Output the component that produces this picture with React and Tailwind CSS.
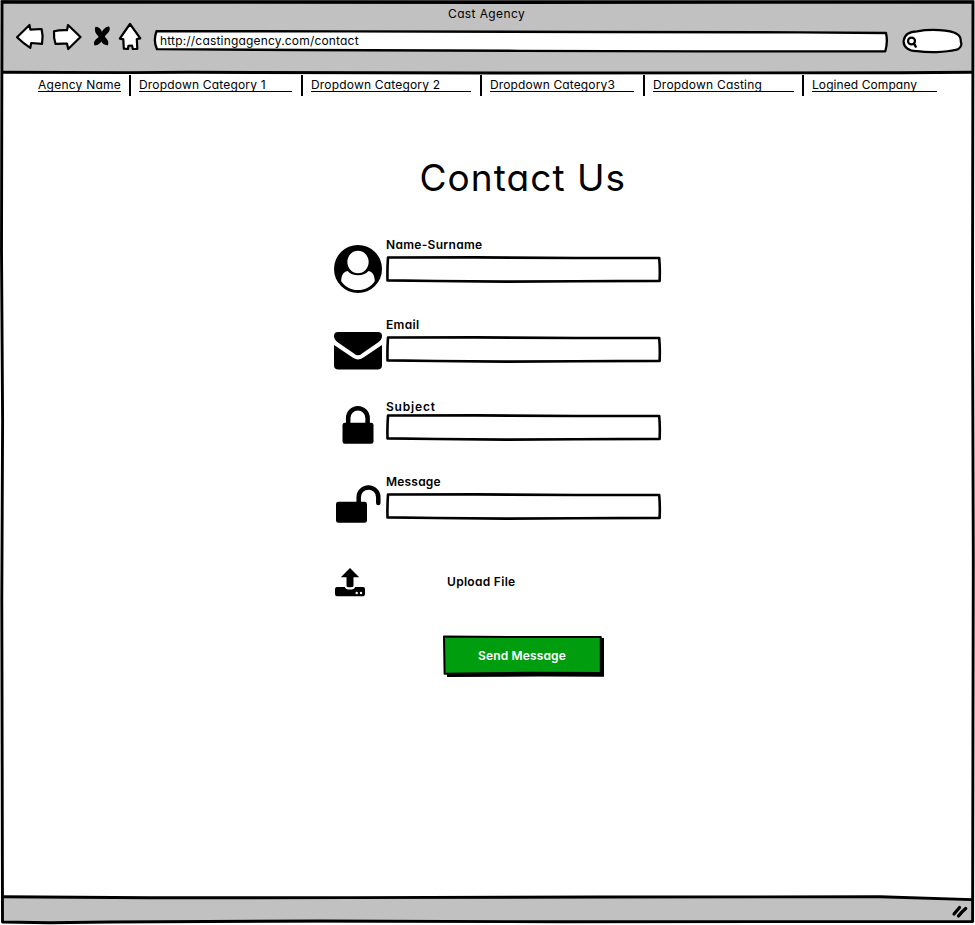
import React from "react";

const ink = { stroke: "#000", strokeLinejoin: "round", strokeLinecap: "round" };

function WindowFrame() {
  return (
    <svg className="pointer-events-none absolute inset-0" width="975" height="925" fill="none" {...ink}>
      <path d="M2 1 H973" stroke="#3d403d" strokeWidth="3" />
      <path d="M2 2 L500 2.5 L973 2.2 L972.5 300 L973.3 560 L972.6 921.5 L560 921.8 L320 921 L110 922 L50 922.8 L2.5 922 L1.8 600 L2.6 420 L1.5 250 Z" strokeWidth="2.9" />
      <path d="M3 72.3 L130 72.6 L190 72.3 L500 73 L900 72.8 L972 72.2" strokeWidth="2.9" />
      <path d="M3 896.8 L150 897.8 L350 897.6 L600 897 L880 896.8 L972 899.6" strokeWidth="2.9" />
    </svg>
  );
}

function NavIcons() {
  return (
    <svg className="h-[30px] w-[130px] shrink-0" viewBox="15 22 130 30" fill="#fff" strokeWidth="2.2" {...ink}>
      <path d="M17 37.2 L29.5 25 L30.4 29.6 L41.6 29 L42.6 36 L42 43.8 L31.2 43 L30.3 47.8 Q23 43 17 37.2 Z" />
      <path d="M54 31.2 Q60 29.8 67 30.2 L68 25 L80.5 37 L68.2 49 L67 43.6 Q61 43.5 55.5 43.8 Q53.6 38 54 31.2 Z" />
      <path d="M130 24 L140.3 38.3 L136.8 39 L137.3 48.8 L132.8 49 L132 45.5 L128.4 45.8 L128 49 L123.8 48.7 L123.3 39.4 L119.8 38.6 Q125 31 130 24 Z" />
      <path d="M96 27.6 Q99.8 28 101.2 32.6 L103.8 37 Q108.2 41 107.2 44.4 Q103.4 44.4 101.4 40 L99.4 36.4 Q94.6 31.4 96 27.6 Z" fill="#000" strokeWidth="1.8" />
      <path d="M108.8 27 Q110.4 30.4 105.4 34.6 L102.6 38.4 Q99.6 44.4 94.8 44.8 Q93.4 41.4 98.6 38 L101.6 33.4 Q104.4 27.4 108.8 27 Z" fill="#000" strokeWidth="1.2" />
    </svg>
  );
}

function AddressBar() {
  return (
    <div className="relative flex h-[24px] w-[736px] items-center">
      <svg className="absolute inset-0" width="736" height="24" viewBox="152 29 736 24" fill="#fff" strokeWidth="2.3" {...ink}>
        <path d="M156.5 31.2 L350 31.3 L600 32 L800 32.3 L886 33 Q888 42 885.3 51.3 L700 51.3 L520 50.8 L300 50 L157 49.2 Q153 41 156.5 31.2 Z" />
      </svg>
      <span className="relative ml-[8px] text-[12px] leading-4 tracking-[0.18px]">http://castingagency.com/contact</span>
    </div>
  );
}

function SearchBox() {
  return (
    <svg className="h-[26px] w-[62px] shrink-0" viewBox="901 28 62 26" fill="#fff" strokeWidth="2.2" {...ink}>
      <path d="M917 31.3 C930 29 950 29.6 957 34 C960.5 36 961 39 960.8 42 C962.5 45 960 49 956 49.8 C945 52.6 928 52.6 917 51.2 C909 51.5 903 47 903.7 40.5 C904.5 34 909 31.6 917 31.3 Z" />
      <ellipse cx="911.5" cy="41" rx="3.5" ry="3.3" />
      <path d="M914 43.5 L915.7 46.6" strokeWidth="2.4" />
    </svg>
  );
}

const menu = [
  { label: "Agency Name", cls: "w-[83px] tracking-[0.25px]", gap: "ml-[38px]" },
  { label: "Dropdown Category 1", cls: "w-[153px] tracking-[0.18px]", gap: "ml-[8px]" },
  { label: "Dropdown Category 2", cls: "w-[160px] tracking-[0.18px]", gap: "ml-[8px]" },
  { label: "Dropdown Category3", cls: "w-[144px] tracking-[0.14px]", gap: "ml-[8px]" },
  { label: "Dropdown Casting", cls: "w-[141px] tracking-[0.2px]", gap: "ml-[8px]" },
  { label: "Logined Company", cls: "w-[125px] tracking-[0.08px]", gap: "ml-[8px]" },
];
const dividerGap = ["ml-[8px]", "ml-[9px]", "ml-[9px]", "ml-[9px]", "ml-[8px]"];

function Menu() {
  return (
    <nav className="flex h-[23px] items-start text-[12px] leading-[13px]">
      {menu.map((m, i) => (
        <React.Fragment key={m.label}>
          <a className={`${m.gap} ${m.cls} mt-[5px] h-[14px] shrink-0 whitespace-nowrap border-b border-black`}>{m.label}</a>
          {i < dividerGap.length && <span className={`${dividerGap[i]} mt-[2px] h-[21px] w-[2px] shrink-0 bg-black`} />}
        </React.Fragment>
      ))}
    </nav>
  );
}

function UserIcon() {
  return (
    <svg width="48" height="48" viewBox="0 0 48 48">
      <circle cx="24" cy="24" r="24" />
      <path d="M13.5 26 C9 26.5 7.2 31.5 7.2 36.2 C11 42 17 45 24 45 C31 45 37 42 40.8 36.2 C40.8 31.5 39 26.5 34.5 26 C31.8 28.9 28 30.2 24 30.2 C20 30.2 16.2 28.9 13.5 26 Z" fill="#fff" />
      <ellipse cx="24" cy="17" rx="11.4" ry="12" fill="#fff" stroke="#000" strokeWidth="1.5" />
    </svg>
  );
}

function MailIcon() {
  return (
    <svg width="48" height="38" viewBox="0 0 48 38">
      <path d="M4 0 H44 Q48 0 48 4 Q48 7.5 44 10.5 L28 21.5 Q24 25.2 20 21.5 L4 10.5 Q0 7.5 0 4 Q0 0 4 0 Z" />
      <path d="M0 13 L19 25.8 Q24 29.4 29 25.8 L48 13 V33.2 Q48 37.5 43.5 37.5 H4.5 Q0 37.5 0 33.2 Z" />
    </svg>
  );
}

function LockIcon() {
  return (
    <svg width="32" height="38" viewBox="0 0 32 38">
      <path d="M6.2 19 V12 A9.7 9.7 0 0 1 25.6 12 V19" fill="none" stroke="#000" strokeWidth="4.5" />
      <rect x="0.5" y="16.8" width="31" height="21" rx="2.4" />
    </svg>
  );
}

function UnlockIcon() {
  return (
    <svg width="45" height="38" viewBox="0 0 45 38">
      <path d="M22.7 19 V12.2 A9.8 9.8 0 0 1 42.3 12.2 V18" fill="none" stroke="#000" strokeWidth="4.5" strokeLinecap="round" />
      <rect y="16.8" width="31" height="21" rx="2.4" />
    </svg>
  );
}

function UploadIcon() {
  return (
    <svg width="30" height="29" viewBox="0 0 30 29">
      <path d="M15 0 L24.2 9.3 H18.5 V18 Q18.3 19.3 15 19.3 Q11.7 19.3 11.5 18 V9.3 H5.8 Z" />
      <path d="M2 19 H9.8 Q10.8 21.6 15 21.6 Q19.2 21.6 20.2 19 H28 Q30 19 30 21 V26 Q30 28.3 28 28.3 H2 Q0 28.3 0 26 V21 Q0 19 2 19 Z" />
      <circle cx="21.7" cy="25" r="1.2" fill="#fff" />
      <circle cx="26" cy="25" r="1.2" fill="#fff" />
    </svg>
  );
}

function InputBox() {
  return (
    <svg className="block" width="276" height="28" viewBox="0 0 276 28" fill="#fff" strokeWidth="2.6" {...ink}>
      <path d="M2 1.5 L90 1.4 L190 2 L273.2 2 Q274.2 13 273.6 24.9 L190 25.3 L120 25.6 L50 25 L1.5 24.4 Q1.2 13 2 1.5 Z" />
    </svg>
  );
}

const fields = [
  { label: "Name-Surname", Icon: UserIcon, row: "h-[80px]", icon: "pt-[9px]", lab: "h-[20px] tracking-[0.3px]" },
  { label: "Email", Icon: MailIcon, row: "h-[82px]", icon: "pt-[16px]", lab: "h-[20px] tracking-[0.35px]" },
  { label: "Subject", Icon: LockIcon, row: "h-[75px]", icon: "pl-[8px] pt-[8px]", lab: "h-[16px] tracking-[0.8px]" },
  { label: "Message", Icon: UnlockIcon, row: "h-[95px]", icon: "pl-[2px] pt-[12px]", lab: "h-[20px] tracking-[0.2px]" },
];

function ContactForm() {
  return (
    <main className="flex-1">
      <h1 className="ml-[419.5px] mt-[56px] h-[52px] whitespace-nowrap text-[37px] font-[430] leading-[52px] tracking-[1.05px]">Contact Us</h1>
      <div className="ml-[334px] mt-[32px] w-[330px] text-[12px] font-semibold leading-4">
        {fields.map(({ label, Icon, row, icon, lab }) => (
          <div key={label} className={`flex ${row}`}>
            <div className={`w-[52px] shrink-0 ${icon}`}><Icon /></div>
            <div>
              <label className={`block leading-[18px] ${lab}`}>{label}</label>
              <InputBox />
            </div>
          </div>
        ))}
        <div className="flex h-[66px] items-start pl-[1px]">
          <UploadIcon />
          <span className="ml-[82px] mt-[6px] tracking-[0.3px]">Upload File</span>
        </div>
        <button className="relative ml-[108px] flex h-[44px] w-[163px] items-center justify-center text-white">
          <svg className="absolute inset-0" width="163" height="44" viewBox="442 634 163 44">
            <path d="M447 638 H604 L604 676.8 L540 676.5 L447 677 Z" />
            <path d="M444 636.6 L520 637 L600.8 637 L600.8 673 L530 672.8 L444.6 673.8 Z" fill="#009e0f" strokeWidth="2" {...ink} />
          </svg>
          <span className="relative -mt-px mr-[3px] tracking-[0.13px]">Send Message</span>
        </button>
      </div>
    </main>
  );
}

export default function App() {
  return (
    <div className="relative flex h-[925px] w-[975px] flex-col overflow-hidden bg-white font-['Inter','Open_Sans',sans-serif] text-black [font-feature-settings:'cv11','ss03']">
      <header className="mx-[2px] h-[73px] shrink-0 bg-[#c1c1c1]">
        <div className="flex h-[22px] items-center pl-[446px] pt-[5px] text-[12px] leading-4 tracking-[0.38px]">Cast Agency</div>
        <div className="flex h-[38px] items-center">
          <div className="-mt-[8px] ml-[13px] flex"><NavIcons /></div>
          <div className="ml-[7px]"><AddressBar /></div>
          <div className="ml-[13px] flex"><SearchBox /></div>
        </div>
      </header>
      <Menu />
      <ContactForm />
      <footer className="mx-[2px] flex h-[25px] shrink-0 items-start justify-end bg-[#c1c1c1] pr-[4px]">
        <svg className="mt-[6px]" width="18" height="14" viewBox="952 904 18 14" strokeWidth="3.2" {...ink}>
          <path d="M955 914 L960.5 907.5" />
          <path d="M959.5 916 Q962 912.5 966.7 908.5" />
        </svg>
      </footer>
      <div className="h-[2px] shrink-0" />
      <WindowFrame />
    </div>
  );
}
